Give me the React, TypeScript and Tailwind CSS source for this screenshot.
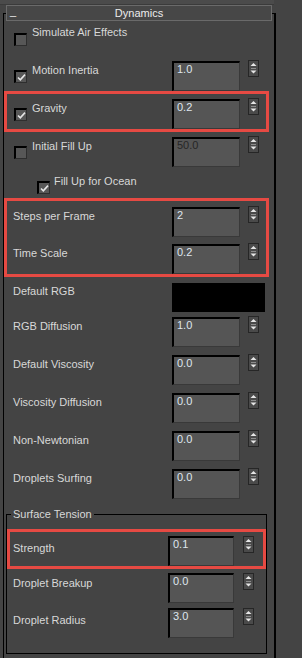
import React from "react";

function Check({ on, className = "" }: { on?: boolean; className?: string }) {
  return (
    <span
      className={`w-[13px] h-[13px] shrink-0 flex items-center justify-center bg-[#575757] border-t-2 border-l-2 border-r border-b border-t-black border-l-black border-r-[#2e2e2e] border-b-[#2e2e2e] ${className}`}
    >
      {on && (
        <svg width="9" height="9" viewBox="0 0 9 9">
          <path d="M1 4.5 L3.3 6.8 L8 1.6" fill="none" stroke="#e6e6e6" strokeWidth="1.6" />
        </svg>
      )}
    </span>
  );
}

function Arrows() {
  return (
    <div className="w-[11px] h-[17px] shrink-0 bg-[#4a4a4a] border border-[#262626]">
      <svg width="9" height="15" viewBox="0 0 9 15" className="block">
        <polygon points="1.5,5 7.5,5 4.5,2" fill="#e6e6e6" />
        <line x1="2" y1="7.5" x2="7" y2="7.5" stroke="#8c8c8c" strokeWidth="1" />
        <polygon points="1.5,9.5 7.5,9.5 4.5,12.5" fill="#e6e6e6" />
      </svg>
    </div>
  );
}

function Spinner({ value, small, dim }: { value: string; small?: boolean; dim?: boolean }) {
  return (
    <div className="flex items-start">
      <div
        className={`${small ? "w-[66px]" : "w-[68px] -mt-0"} h-[30px] bg-[#555555] border-t-2 border-l-2 border-r border-b border-t-black border-l-black border-r-[#393939] border-b-[#393939] pl-[3px] leading-[13px] ${
          dim ? "text-[#262626]" : "text-[#dfe6ee]"
        }`}
      >
        {value}
      </div>
      <div className={small ? "ml-[9px]" : "ml-[8px] -mt-[1px]"}>
        <Arrows />
      </div>
    </div>
  );
}

export default function App() {
  return (
    <div className="w-[302px] h-[658px] bg-[#444444] overflow-hidden font-['Liberation_Sans',Arial,sans-serif] text-[11px] text-[#d8d8d8]">
      <div className="w-[274px] h-[5px] bg-[#4b4b4b] border-b border-[#3b3b3b]" />

      {/* rollout title */}
      <div className="relative z-10 ml-[6px] w-[266px] h-[16px] bg-[#474747] border border-[#6a6a6a] flex items-center justify-center">
        <span className="absolute left-[3px] -top-[3px] text-[#ececec]">_</span>
        <span className="text-[#ececec] leading-[13px]">Dynamics</span>
      </div>

      <div className="-mt-[8px] ml-[3px] w-[273px] h-[645px] border-t border-l border-r-2 border-black">
        <div className="mt-[11px] h-[36px] flex items-start pl-[10px]">
          <Check className="mt-[8px]" />
          <span className="ml-[5px] leading-[14px]">Simulate Air Effects</span>
        </div>

        <div className="h-[30px] flex items-start">
          <div className="w-[168px] pl-[10px] pt-[2px] flex items-start">
            <Check on className="mt-[7px]" />
            <span className="ml-[5px] leading-[14px]">Motion Inertia</span>
          </div>
          <Spinner value="1.0" />
        </div>

        <div className="w-[265px] h-[41px] border-[3px] border-[#e64a43] pt-[5px]">
          <div className="h-[30px] flex items-start">
            <div className="w-[165px] pl-[7px] pt-[2px] flex items-start">
              <Check on className="mt-[7px]" />
              <span className="ml-[5px] leading-[14px]">Gravity</span>
            </div>
            <Spinner value="0.2" />
          </div>
        </div>

        <div className="mt-[5px] h-[30px] flex items-start">
          <div className="w-[168px] pl-[10px] pt-[2px] flex items-start">
            <Check className="mt-[7px]" />
            <span className="ml-[5px] leading-[14px]">Initial Fill Up</span>
          </div>
          <Spinner value="50.0" dim />
        </div>

        <div className="h-[31px] pt-[7px] pl-[33px] flex items-start">
          <Check on className="mt-[7px]" />
          <span className="ml-[4px] leading-[14px]">Fill Up for Ocean</span>
        </div>

        <div className="w-[265px] h-[79px] border-[3px] border-[#e64a43] pt-[6px]">
          <div className="h-[30px] flex items-start">
            <div className="w-[165px] pl-[6px] pt-[2px] leading-[14px]">Steps per Frame</div>
            <Spinner value="2" />
          </div>
          <div className="mt-[7px] h-[30px] flex items-start">
            <div className="w-[165px] pl-[6px] pt-[2px] leading-[14px]">Time Scale</div>
            <Spinner value="0.2" />
          </div>
        </div>

        <div className="mt-[6px] h-[29px] flex items-start">
          <div className="w-[168px] pl-[9px] pt-[1px] leading-[14px]">Default RGB</div>
          <div className="w-[93px] h-[29px] bg-black" />
        </div>

        {[
          ["RGB Diffusion", "1.0", "mt-[5px]"],
          ["Default Viscosity", "0.0", "mt-[8px]"],
          ["Viscosity Diffusion", "0.0", "mt-[8px]"],
          ["Non-Newtonian", "0.0", "mt-[8px]"],
          ["Droplets Surfing", "0.0", "mt-[8px]"],
        ].map(([label, value, mt]) => (
          <div key={label} className={`${mt} h-[30px] flex items-start`}>
            <div className="w-[168px] pl-[9px] pt-[2px] leading-[14px]">{label}</div>
            <Spinner value={value} />
          </div>
        ))}

        <fieldset className="mt-[8px] ml-[2px] w-[261px] h-[147px] border border-black">
          <legend className="ml-[4px] px-[2px] leading-[14px]">Surface Tension</legend>

          <div className="mt-[8px] h-[40px] border-[3px] border-[#e64a43] pt-[4px]">
            <div className="h-[30px] flex items-start">
              <div className="w-[158px] pl-[3px] pt-[5px] leading-[14px]">Strength</div>
              <Spinner value="0.1" small />
            </div>
          </div>

          <div className="mt-[4px] h-[30px] flex items-start">
            <div className="w-[161px] pl-[6px] pt-[3px] leading-[14px]">Droplet Breakup</div>
            <Spinner value="0.0" small />
          </div>

          <div className="mt-[5px] h-[31px] flex items-start">
            <div className="w-[161px] pl-[6px] pt-[5px] leading-[14px]">Droplet Radius</div>
            <Spinner value="3.0" small />
          </div>
        </fieldset>
      </div>
    </div>
  );
}
